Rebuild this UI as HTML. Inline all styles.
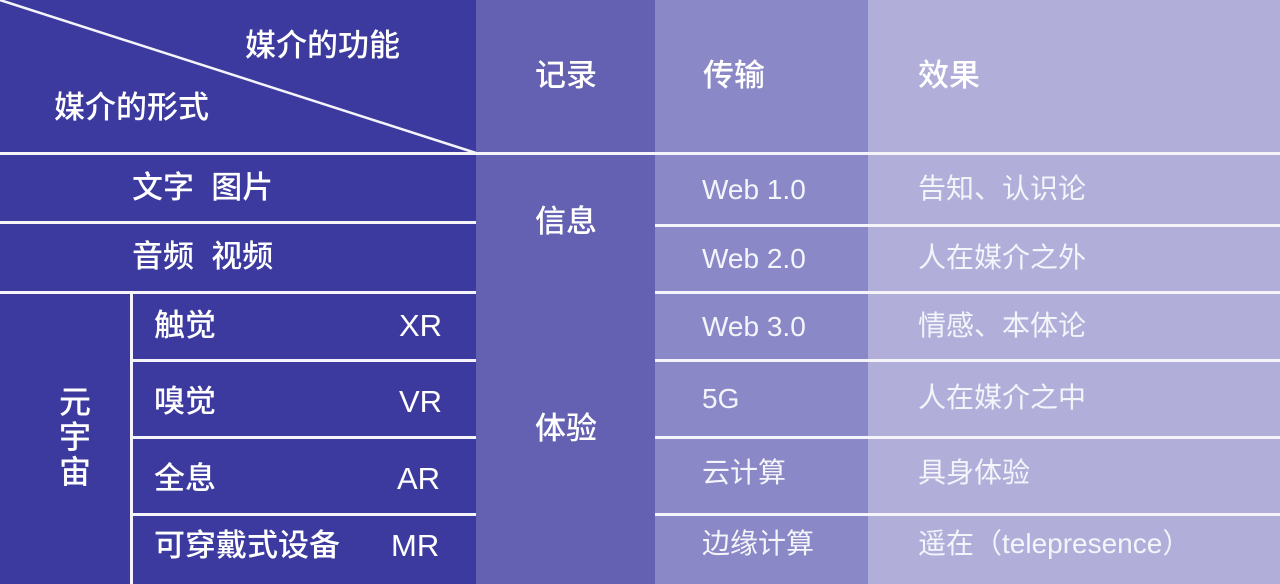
<!DOCTYPE html>
<html><head><meta charset="utf-8"><style>
body{margin:0;width:1280px;height:584px;overflow:hidden;position:relative;font-family:"Liberation Sans","Noto Sans CJK SC",sans-serif;color:#fff}
.b{position:absolute;top:0;height:584px}
.t{position:absolute;white-space:nowrap;line-height:1}
.h{position:absolute;height:3px;background:#f4f4fa}
.m{font-size:31px;font-weight:500}
.l{font-size:28px;font-weight:400;color:#f4f4fb}
</style></head><body>
<div class="b" style="left:0;width:476px;background:#3c3a9e"></div>
<div class="b" style="left:476px;width:179px;background:#6461b2"></div>
<div class="b" style="left:655px;width:213px;background:#8a88c6"></div>
<div class="b" style="left:868px;width:412px;background:#b1afd9"></div>
<svg style="position:absolute;left:0;top:0" width="480" height="156"><line x1="0" y1="0" x2="476" y2="153" stroke="#f4f4fa" stroke-width="2.5"/></svg>
<div class="h" style="left:0;width:1280px;top:152px"></div>
<div class="h" style="left:0;width:476px;top:221px"></div>
<div class="h" style="left:655px;width:625px;top:224px"></div>
<div class="h" style="left:0;width:476px;top:291px"></div>
<div class="h" style="left:655px;width:625px;top:291px"></div>
<div class="h" style="left:131px;width:345px;top:359px"></div>
<div class="h" style="left:655px;width:625px;top:359px"></div>
<div class="h" style="left:131px;width:345px;top:436px"></div>
<div class="h" style="left:655px;width:625px;top:436px"></div>
<div class="h" style="left:131px;width:345px;top:513px"></div>
<div class="h" style="left:655px;width:625px;top:513px"></div>
<div style="position:absolute;left:130px;top:292px;width:3px;height:292px;background:#f4f4fa"></div>

<div class="t m" style="left:245px;top:30px">媒介的功能</div>
<div class="t m" style="left:54px;top:92px">媒介的形式</div>
<div class="t m" style="left:535px;top:60px">记录</div>
<div class="t m" style="left:703px;top:60px">传输</div>
<div class="t m" style="left:918px;top:60px">效果</div>

<div class="t m" style="left:132px;top:172px">文字&nbsp;&nbsp;图片</div>
<div class="t m" style="left:132px;top:241px">音频&nbsp;&nbsp;视频</div>
<div class="t m" style="left:535px;top:206px">信息</div>
<div class="t m" style="left:535px;top:413px">体验</div>
<div class="t m" style="left:59px;top:385px;width:33px;line-height:35px;white-space:normal;font-size:32px">元宇宙</div>

<div class="t m" style="left:154px;top:310px">触觉</div><div class="t m" style="left:399px;top:310px">XR</div>
<div class="t m" style="left:154px;top:386px">嗅觉</div><div class="t m" style="left:399px;top:386px">VR</div>
<div class="t m" style="left:154px;top:463px">全息</div><div class="t m" style="left:397px;top:463px">AR</div>
<div class="t m" style="left:154px;top:530px">可穿戴式设备</div><div class="t m" style="left:391px;top:530px">MR</div>

<div class="t l" style="left:702px;top:176px">Web 1.0</div><div class="t l" style="left:918px;top:175px">告知、认识论</div>
<div class="t l" style="left:702px;top:245px">Web 2.0</div><div class="t l" style="left:918px;top:244px">人在媒介之外</div>
<div class="t l" style="left:702px;top:313px">Web 3.0</div><div class="t l" style="left:918px;top:312px">情感、本体论</div>
<div class="t l" style="left:702px;top:385px">5G</div><div class="t l" style="left:918px;top:384px">人在媒介之中</div>
<div class="t l" style="left:702px;top:459px">云计算</div><div class="t l" style="left:918px;top:459px">具身体验</div>
<div class="t l" style="left:702px;top:530px">边缘计算</div><div class="t l" style="left:918px;top:530px">遥在（telepresence）</div>
</body></html>
